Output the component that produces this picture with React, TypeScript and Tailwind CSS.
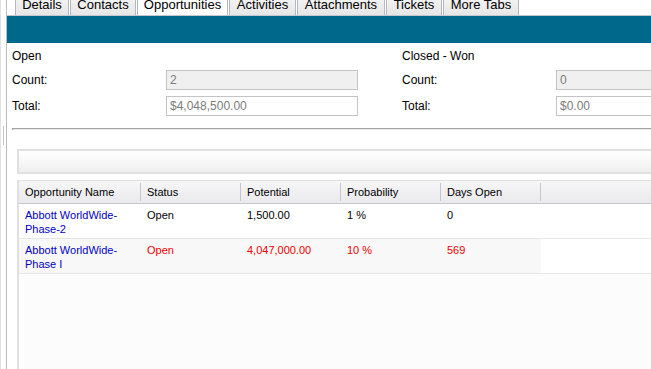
import React from "react";

const tabs = [
  { label: "Details", w: 54 },
  { label: "Contacts", w: 66 },
  { label: "Opportunities", w: 91, active: true },
  { label: "Activities", w: 67 },
  { label: "Attachments", w: 88 },
  { label: "Tickets", w: 56 },
  { label: "More Tabs", w: 76 },
];

const cols = [
  { label: "Opportunity Name", w: 122 },
  { label: "Status", w: 100 },
  { label: "Potential", w: 100 },
  { label: "Probability", w: 100 },
  { label: "Days Open", w: 100 },
];

const rows = [
  { name: ["Abbott WorldWide-", "Phase-2"], status: "Open", potential: "1,500.00", prob: "1 %", days: "0", red: false },
  { name: ["Abbott WorldWide-", "Phase I"], status: "Open", potential: "4,047,000.00", prob: "10 %", days: "569", red: true },
];

function Group({ title, count, total }: { title: string; count: string; total: string }) {
  return (
    <div className="w-[390px] shrink-0 flex flex-col">
      <div className="h-[14px] leading-[14px] text-[12px] text-black">{title}</div>
      <div className="mt-[7px] flex items-center h-[20px]">
        <div className="w-[154px] text-[12px] text-black">Count:</div>
        <div className="w-[192px] h-[20px] border border-[#c4c4c8] bg-[#f0f0f0] text-[12px] text-[#7c7c7c] pl-[3px] leading-[18px]">{count}</div>
      </div>
      <div className="mt-[6px] flex items-center h-[20px]">
        <div className="w-[154px] text-[12px] text-black">Total:</div>
        <div className="w-[192px] h-[20px] border border-[#c4c4c8] bg-white text-[12px] text-[#7c7c7c] pl-[3px] leading-[18px]">{total}</div>
      </div>
    </div>
  );
}

export default function App() {
  return (
    <div
      className="w-[651px] h-[369px] overflow-hidden flex bg-white"
      style={{ fontFamily: '"Liberation Sans", Arial, sans-serif' }}
    >
      <div className="w-[1px] shrink-0 bg-[#e2e2e4]" />
      <div className="w-[5px] shrink-0 flex flex-col">
        <div className="h-[126px]" />
        <div className="ml-[2px] w-[1px] h-[19px] bg-[#c4c4c8]" />
      </div>
      <div className="w-[1px] shrink-0 bg-[#b9bcc4]" />
      <div className="flex-1 min-w-0 flex flex-col">
        {/* tabs */}
        <div className="h-[16px] shrink-0 flex items-end pl-[8px] border-b border-[#c2c6ce]">
          {tabs.map((t) => (
            <div
              key={t.label}
              style={{ width: t.w }}
              className={`h-[22px] shrink-0 mr-[1px] border border-b-0 border-[#b4b8c0] pt-[3px] text-center text-[13px] leading-[15px] text-black whitespace-nowrap ${
                t.active ? "bg-white" : "bg-gradient-to-b from-[#f6f6f6] to-[#e6e6e6]"
              }`}
            >
              {t.label}
            </div>
          ))}
        </div>
        {/* teal bar */}
        <div className="h-[27px] shrink-0 bg-[#00688a]" />
        {/* summary */}
        <div className="pt-[6px] pl-[5px] flex">
          <Group title="Open" count="2" total="$4,048,500.00" />
          <Group title="Closed - Won" count="0" total="$0.00" />
        </div>
        {/* hr */}
        <div className="mt-[12px] ml-[5px] h-[2px] shrink-0 border-t border-l border-[#a2a2a2] bg-[#ececec]" />
        {/* grid section */}
        <div className="ml-[10px] mt-[19px] flex-1 flex flex-col min-h-0">
          <div className="h-[25px] shrink-0 border-t-2 border-b-2 border-l-2 border-[#e0e0e0] bg-gradient-to-b from-white to-[#efefef]" />
          <div className="mt-[6px] flex-1 flex flex-col border-l-2 border-t border-[#e0e0e0] bg-[#fcfcfc]">
            {/* header */}
            <div className="h-[23px] shrink-0 flex border-b border-[#c6c8ce] bg-gradient-to-b from-[#f6f6f7] to-[#eaeaed]">
              {cols.map((c) => (
                <div
                  key={c.label}
                  style={{ width: c.w }}
                  className="shrink-0 flex items-center pl-[6px] pt-[1px] text-[11px] text-black border-r border-[#c4c6cc] my-[2px]"
                >
                  {c.label}
                </div>
              ))}
              <div className="flex-1" />
            </div>
            {rows.map((r, i) => {
              const tc = r.red ? "text-[#f00000]" : "text-black";
              return (
                <div key={i} className="h-[35px] shrink-0 flex border-b border-[#e6e6e6] bg-white">
                  <div className={`flex ${r.red ? "bg-[#f8f8f8]" : "bg-white"}`}>
                    <div className="w-[122px] shrink-0 pl-[6px] pt-[4px] text-[11px] leading-[14px] text-[#0000c8]">
                      {r.name[0]}
                      <br />
                      {r.name[1]}
                    </div>
                    <div className={`w-[100px] shrink-0 pl-[6px] pt-[4px] text-[11px] leading-[14px] ${tc}`}>{r.status}</div>
                    <div className={`w-[100px] shrink-0 pl-[6px] pt-[4px] text-[11px] leading-[14px] ${tc}`}>{r.potential}</div>
                    <div className={`w-[100px] shrink-0 pl-[6px] pt-[4px] text-[11px] leading-[14px] ${tc}`}>{r.prob}</div>
                    <div className={`w-[100px] shrink-0 pl-[6px] pt-[4px] text-[11px] leading-[14px] ${tc}`}>{r.days}</div>
                  </div>
                  <div className="flex-1" />
                </div>
              );
            })}
          </div>
        </div>
      </div>
    </div>
  );
}
